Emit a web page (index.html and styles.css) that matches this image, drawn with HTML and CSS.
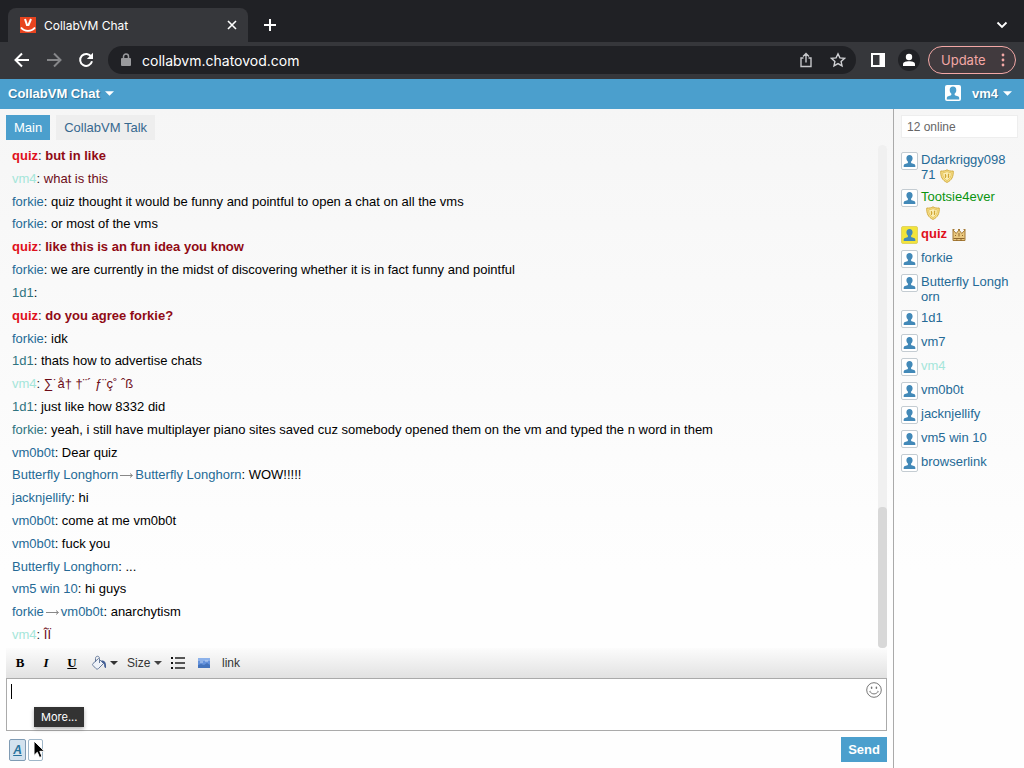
FILE: index.html
```html
<!DOCTYPE html>
<html lang="en">
<head>
    <meta charset="UTF-8">
    <meta name="viewport" content="width=device-width, initial-scale=1.0">
    <title>CollabVM Chat</title>
    <link rel="stylesheet" href="styles.css">
</head>
<body>
    <!-- shared icons -->
    <svg class="defs" width="0" height="0" aria-hidden="true">
        <symbol id="user" viewBox="0 0 16 16">
            <path d="M8 1.500c-2.200 0-3.300 1.500-3.300 3.500 0 1.600.7 2.900 1.700 3.700 0 1-.2 1.500-.8 1.800l-2.400.8c-1 .4-1.400 1-1.400 2v1.200h12.400v-1.200c0-1-.4-1.600-1.400-2l-2.400-.8c-.6-.3-.8-.8-.8-1.800 1-.8 1.700-2.100 1.700-3.700 0-2-1.100-3.500-3.300-3.500z"/>
        </symbol>
        <symbol id="shield" viewBox="0 0 14 14">
            <path d="M7 .8C5.500 1.900 3.300 2.300.8 2c-.3 5.500 1.400 9.300 6.200 11.400C11.800 11.300 13.500 7.500 13.200 2 10.700 2.300 8.500 1.900 7 .8z" fill="#f7e28c" stroke="#d2aa3e"/>
            <path d="M7 2.600C5.700 3.400 4.300 3.700 2.700 3.700c0 3.800 1.300 6.400 4.300 8 3-1.600 4.300-4.200 4.300-8-1.600 0-3-.3-4.300-1.100z" fill="#fbeeb4" stroke="#e3bf55" stroke-width=".8"/>
            <path d="M5.400 5v4M8.400 5v4M5 7h1.500M8 5.200h1.300M8 7.200h1.300" stroke="#cfa32f" fill="none"/>
        </symbol>
        <symbol id="crown" viewBox="0 0 14 14">
            <path d="M1 12.500V2l3.200 3.500L7 2l2.800 3.500L13 2v10.500z" fill="#e9c880" stroke="#a57a35"/>
            <path d="M1.500 10.500h11M3.500 8V7M7 8.500V5M10.500 8V7M4 12h1.500M8 12h2" stroke="#8f672c" fill="none"/>
            <path d="M.5 1.500h2M6 1.500h2M11.500 1.500h2" stroke="#a57a35"/>
        </symbol>
        <symbol id="arrow" viewBox="0 0 8 4">
            <path d="M0 0h8L4 4z" fill="currentColor"/>
        </symbol>
    </svg>

    <div class="browser-tabs">
        <div class="browser-tab">
            <svg class="favicon" width="16" height="16" viewBox="0 0 16 16">
                <rect width="16" height="16" fill="#e8441f"/>
                <path d="M5 2l2 6h1.500l2.500-6" fill="none" stroke="#fff" stroke-width="2"/>
                <path d="M1 10.500c3.500 4.500 10.500 4.500 14 0" fill="none" stroke="#fff" stroke-width="1.800"/>
            </svg>
            <span class="browser-title">CollabVM Chat</span>
            <button class="icon-btn" aria-label="Close tab">
                <svg width="16" height="16" viewBox="0 0 16 16"><path d="M4 4l8 8M12 4l-8 8" stroke="#fff" stroke-width="1.600"/></svg>
            </button>
        </div>
        <button class="icon-btn new-tab" aria-label="New tab">
            <svg width="16" height="16" viewBox="0 0 16 16"><path d="M8 2v12M2 8h12" stroke="#fff" stroke-width="2"/></svg>
        </button>
        <button class="icon-btn tab-search" aria-label="Search tabs">
            <svg width="16" height="16" viewBox="0 0 16 16"><path d="M3.500 5.500L8 10l4.500-4.500" fill="none" stroke="#fff" stroke-width="1.800"/></svg>
        </button>
    </div>

    <div class="browser-bar">
        <div class="nav-buttons">
            <button class="icon-btn" aria-label="Back">
                <svg width="16" height="16" viewBox="0 0 16 16"><path d="M15 8H2M8 1.500L1.500 8 8 14.500" fill="none" stroke="#fff" stroke-width="2"/></svg>
            </button>
            <button class="icon-btn" aria-label="Forward">
                <svg width="16" height="16" viewBox="0 0 16 16"><path d="M1 8h13M8 1.500L14.500 8 8 14.500" fill="none" stroke="#86878a" stroke-width="2"/></svg>
            </button>
            <button class="icon-btn" aria-label="Reload">
                <svg width="16" height="16" viewBox="0 0 16 16"><path d="M13.300 4.800A6 6 0 1 0 14 9.300" fill="none" stroke="#fff" stroke-width="2"/><path d="M15 .8v6.200H8.800z" fill="#fff"/></svg>
            </button>
        </div>
        <div class="address">
            <svg width="10" height="14" viewBox="0 0 10 14"><rect y="5" width="10" height="8" rx="1" fill="#9a9b9e"/><path d="M2.500 6V3.500a2.500 2.500 0 0 1 5 0V6" fill="none" stroke="#9a9b9e" stroke-width="1.500"/></svg>
            <input type="text" aria-label="Address" value="collabvm.chatovod.com">
            <button class="icon-btn" aria-label="Share">
                <svg width="16" height="16" viewBox="0 0 16 16"><path d="M5.500 6H3v8.500h10V6h-2.500M8 10.500V2M5 4.500l3-3 3 3" fill="none" stroke="#c6c7ca" stroke-width="1.400"/></svg>
            </button>
            <button class="icon-btn" aria-label="Bookmark">
                <svg width="16" height="16" viewBox="0 0 16 16"><path d="M8 1.800l1.900 4.100 4.500.5-3.300 3 .9 4.500L8 11.600l-4 2.300.9-4.500-3.300-3 4.500-.5z" fill="none" stroke="#d0d1d4" stroke-width="1.400"/></svg>
            </button>
        </div>
        <button class="icon-btn" aria-label="Side panel">
            <svg width="16" height="16" viewBox="0 0 16 16"><path d="M1 1h14v14H1zM3 3v10h6.500V3z" fill="#fff" fill-rule="evenodd"/></svg>
        </button>
        <button class="icon-btn avatar" aria-label="Profile">
            <svg width="14" height="14" viewBox="0 0 14 14"><circle cx="7" cy="4" r="3.200" fill="#fff"/><path d="M1 13v-1.800C1 9 4 8.200 7 8.200s6 .8 6 3V13z" fill="#fff"/></svg>
        </button>
        <button class="update">
            Update
            <svg width="4" height="14" viewBox="0 0 4 14" fill="#f3a8a6"><circle cx="2" cy="2" r="1.400"/><circle cx="2" cy="7" r="1.400"/><circle cx="2" cy="12" r="1.400"/></svg>
        </button>
    </div>

    <header class="site-header">
        <button class="menu-btn">CollabVM Chat <svg width="9" height="5"><use href="#arrow"/></svg></button>
        <button class="menu-btn">
            <svg class="header-user" width="16" height="16"><use href="#user"/></svg>
            vm4 <svg width="9" height="5"><use href="#arrow"/></svg>
        </button>
    </header>

    <div class="page">
        <main class="chat">
            <nav class="rooms">
                <a class="room active" href="#main">Main</a>
                <a class="room" href="#talk">CollabVM Talk</a>
            </nav>

            <div class="log">
                <div class="messages">
                    <p class="quiz-msg"><a class="quiz" href="#">quiz</a><span>:</span> but in like</p>
                    <p class="vm4-msg"><a class="vm4" href="#">vm4</a><span>:</span> what is this</p>
                    <p><a href="#">forkie</a>: quiz thought it would be funny and pointful to open a chat on all the vms</p>
                    <p><a href="#">forkie</a>: or most of the vms</p>
                    <p class="quiz-msg"><a class="quiz" href="#">quiz</a><span>:</span> like this is an fun idea you know</p>
                    <p><a href="#">forkie</a>: we are currently in the midst of discovering whether it is in fact funny and pointful</p>
                    <p><a class="teal" href="#">1d1</a>:</p>
                    <p class="quiz-msg"><a class="quiz" href="#">quiz</a><span>:</span> do you agree forkie?</p>
                    <p><a href="#">forkie</a>: idk</p>
                    <p><a class="teal" href="#">1d1</a>: thats how to advertise chats</p>
                    <p class="vm4-msg"><a class="vm4" href="#">vm4</a><span>:</span> ∑˙å† †¨´ ƒ¨ç˚ ˆß</p>
                    <p><a class="teal" href="#">1d1</a>: just like how 8332 did</p>
                    <p><a class="teal" href="#">forkie</a>: yeah, i still have multiplayer piano sites saved cuz somebody opened them on the vm and typed the n word in them</p>
                    <p><a href="#">vm0b0t</a>: Dear quiz</p>
                    <p><a href="#">Butterfly Longhorn</a><svg class="to" width="17" height="8" viewBox="0 0 17 8"><path d="M2 4.500h12M12 2.500l2.500 2-2.500 2"/></svg><a href="#">Butterfly Longhorn</a>: WOW!!!!!</p>
                    <p><a href="#">jacknjellify</a>: hi</p>
                    <p><a href="#">vm0b0t</a>: come at me vm0b0t</p>
                    <p><a href="#">vm0b0t</a>: fuck you</p>
                    <p><a href="#">Butterfly Longhorn</a>: ...</p>
                    <p><a href="#">vm5 win 10</a>: hi guys</p>
                    <p><a href="#">forkie</a><svg class="to" width="17" height="8" viewBox="0 0 17 8"><path d="M2 4.500h12M12 2.500l2.500 2-2.500 2"/></svg><a href="#">vm0b0t</a>: anarchytism</p>
                    <p class="vm4-msg"><a class="vm4" href="#">vm4</a><span>:</span> ÎÏ</p>
                </div>
                <div class="scroll-track"><div class="scroll-thumb"></div></div>
            </div>

            <div class="format-bar">
                <button class="format" aria-label="Bold"><b>B</b></button>
                <button class="format" aria-label="Italic"><b><i>I</i></b></button>
                <button class="format" aria-label="Underline"><b><u>U</u></b></button>
                <button class="format color" aria-label="Color">
                    <svg width="16" height="16" viewBox="0 0 16 16"><path d="M2 8.500L7.500 3.500l5 5-5 5c-1 .8-1.800.8-2.600 0L2 10.500c-.7-.7-.7-1.400 0-2z" fill="#eef2f8" stroke="#667a9c"/><path d="M4.500 7V3.500c0-3 4-3 4 0V8" fill="none" stroke="#667a9c"/><path d="M10 5.500c3.500-.5 5.500 1.500 5 7.500-1.500 0-2-1.500-1.800-3.500z" fill="#435f96"/></svg>
                    <svg width="8" height="4"><use href="#arrow"/></svg>
                </button>
                <label class="size">
                    <select aria-label="Size"><option>Size</option></select>
                    <svg width="8" height="4"><use href="#arrow"/></svg>
                </label>
                <button class="format" aria-label="List">
                    <svg width="16" height="14" viewBox="0 0 16 14"><path d="M5 2h10M5 7h10M5 12h10" stroke="#222" stroke-width="1.300"/><path d="M1 2h2M1 7h2M1 12h2" stroke="#111" stroke-width="2"/></svg>
                </button>
                <button class="format" aria-label="Image">
                    <svg width="12" height="10" viewBox="0 0 12 10"><rect width="12" height="10" fill="#6593dc"/><rect width="12" height="3" fill="#8db2ea"/><path d="M0 10V7l3-1 3 1 3-2 3 2v3z" fill="#4474bd"/><path d="M2 4h3M7 3h3" stroke="#c3d6f4"/></svg>
                </button>
                <button class="format link">link</button>
            </div>

            <div class="editor">
                <textarea aria-label="Message"></textarea>
                <span class="caret"></span>
                <button class="icon-btn smile" aria-label="Smileys">
                    <svg width="16" height="16" viewBox="0 0 16 16"><g fill="none" stroke="#777"><circle cx="8" cy="8" r="7.300"/><path d="M4 9.500c1.500 3.200 6.500 3.200 8 0M3.500 9.800l1-.6M11.500 9.200l1 .6"/></g><ellipse cx="5.600" cy="5.800" rx=".8" ry="1.300" fill="#777"/><ellipse cx="10.400" cy="5.800" rx=".8" ry="1.300" fill="#777"/></svg>
                </button>
                <span class="tooltip" role="tooltip">More...</span>
            </div>

            <div class="actions">
                <button class="small-btn pressed" aria-label="Formatting"><i>A</i></button>
                <button class="small-btn more" aria-label="More...">
                    <svg class="pointer" width="13" height="20" viewBox="0 0 13 20"><path d="M1 1v14.500l3.300-3.200 2.200 5.200 2.500-1-2.200-5.200h4.700z" fill="#000" stroke="#fff"/></svg>
                </button>
                <button class="send">Send</button>
            </div>
        </main>

        <aside class="sidebar">
            <input class="online" type="text" aria-label="Search users" placeholder="12 online">
            <ul class="users">
                <li><svg class="user-icon"><use href="#user"/></svg><a href="#">Ddarkriggy09871<svg class="badge"><use href="#shield"/></svg></a></li>
                <li><svg class="user-icon"><use href="#user"/></svg><a class="green" href="#">Tootsie4ever<svg class="badge"><use href="#shield"/></svg></a></li>
                <li><svg class="user-icon gold"><use href="#user"/></svg><a class="quiz" href="#">quiz<svg class="badge"><use href="#crown"/></svg></a></li>
                <li><svg class="user-icon"><use href="#user"/></svg><a href="#">forkie</a></li>
                <li><svg class="user-icon"><use href="#user"/></svg><a href="#">Butterfly Longhorn</a></li>
                <li><svg class="user-icon"><use href="#user"/></svg><a href="#">1d1</a></li>
                <li><svg class="user-icon"><use href="#user"/></svg><a href="#">vm7</a></li>
                <li><svg class="user-icon"><use href="#user"/></svg><a class="vm4" href="#">vm4</a></li>
                <li><svg class="user-icon"><use href="#user"/></svg><a href="#">vm0b0t</a></li>
                <li><svg class="user-icon"><use href="#user"/></svg><a href="#">jacknjellify</a></li>
                <li><svg class="user-icon"><use href="#user"/></svg><a href="#">vm5 win 10</a></li>
                <li><svg class="user-icon"><use href="#user"/></svg><a href="#">browserlink</a></li>
            </ul>
        </aside>
    </div>
</body>
</html>
```

FILE: styles.css
```css
* {
    margin: 0;
    padding: 0;
    box-sizing: border-box;
}

body {
    display: flex;
    flex-direction: column;
    height: 100vh;
    font-family: "Liberation Sans", Arial, sans-serif;
    font-size: 13px;
    color: #000;
    background: #fff;
    overflow: hidden;
}

button, input, select, textarea {
    font: inherit;
    color: inherit;
    background: none;
    border: none;
    outline: none;
}

button {
    cursor: pointer;
}

a {
    color: #256a96;
    text-decoration: none;
}

.defs {
    position: absolute;
}

/* browser */
.browser-tabs {
    display: flex;
    align-items: center;
    height: 42px;
    padding: 8px 14px 0 8px;
    background: #202125;
    flex-shrink: 0;
}

.browser-tab {
    display: flex;
    align-items: center;
    gap: 8px;
    width: 240px;
    height: 34px;
    padding: 0 8px 0 12px;
    background: #36373b;
    border-radius: 8px 8px 0 0;
    color: #fff;
    font-family: Inter, sans-serif;
    font-size: 12px;
}

.browser-title {
    flex: 1;
}

.icon-btn {
    display: flex;
    align-items: center;
    justify-content: center;
}

.new-tab {
    margin-left: 14px;
}

.tab-search {
    margin-left: auto;
}

.browser-bar {
    display: flex;
    align-items: center;
    gap: 12px;
    height: 37px;
    padding: 0 8px 1px 14px;
    background: #36373b;
    flex-shrink: 0;
}

.nav-buttons {
    display: flex;
    gap: 16px;
    margin-right: 2px;
}

.address {
    display: flex;
    align-items: center;
    gap: 16px;
    flex: 1;
    height: 28px;
    padding: 0 10px 0 13px;
    margin-right: 2px;
    border-radius: 14px;
    background: #202125;
    color: #fff;
    font-family: Inter, sans-serif;
    font-size: 14px;
}

.address input {
    flex: 1;
    min-width: 0;
    margin-left: -5px;
}

.avatar {
    width: 22px;
    height: 22px;
    border-radius: 50%;
    background: #202125;
}

.update {
    display: flex;
    align-items: center;
    justify-content: space-between;
    width: 88px;
    height: 28px;
    padding: 0 10px 0 12px;
    margin-left: -4px;
    border: 1px solid #f3a8a6;
    border-radius: 14px;
    background: #413a3e;
    color: #f3a8a6;
    font-family: Inter, sans-serif;
}

/* site header */
.site-header {
    display: flex;
    justify-content: space-between;
    align-items: center;
    height: 30px;
    padding: 0 12px 2px 8px;
    background: #4b9fcd;
    flex-shrink: 0;
}

.menu-btn {
    display: flex;
    align-items: center;
    gap: 5px;
    color: #fff;
    font-weight: bold;
    text-shadow: 1px 1px 1px #2d6f96;
}

.header-user {
    margin-right: 6px;
    border-radius: 2px;
    background: #fff;
    fill: #4b9fcd;
}

.page {
    display: flex;
    flex: 1;
    min-height: 0;
    background: linear-gradient(#f6f6f6, #fefefe 70%);
}

.chat {
    display: flex;
    flex-direction: column;
    flex: 1;
    min-width: 0;
    padding: 6px;
}

.rooms {
    display: flex;
    gap: 6px;
    margin-bottom: 5px;
}

.room {
    padding: 0 8px;
    line-height: 25px;
    background: #eee;
    color: #36688e;
}

.room.active {
    background: #4b9fcd;
    color: #fff;
}

/* messages */
.log {
    display: flex;
    flex: 1;
    min-height: 0;
}

.messages {
    display: flex;
    flex-direction: column;
    flex: 1;
    padding: 0 6px 1px;
}

.messages p {
    flex: 1;
    line-height: 22px;
    white-space: nowrap;
}

.messages .teal {
    color: #2f7480;
}

.messages span {
    color: #222;
    font-weight: normal;
}

.messages .quiz, .users .quiz {
    color: #e0101c;
    font-weight: bold;
}

.messages .vm4, .users .vm4 {
    color: #a5e6da;
}

.quiz-msg {
    color: #900a14;
    font-weight: bold;
}

.vm4-msg {
    color: #6d0c18;
}

.to {
    fill: none;
    stroke: #888;
}

.scroll-track {
    display: flex;
    flex-direction: column;
    justify-content: flex-end;
    width: 9px;
    background: #f0f0f0;
    border-radius: 5px;
}

.scroll-thumb {
    height: 28%;
    border-radius: 4px;
    background: #d8d8d8;
}

/* editor */
.format-bar {
    display: flex;
    align-items: center;
    gap: 6px;
    height: 30px;
    padding: 0 4px;
    background: linear-gradient(#fcfcfc, #e2e2e2);
}

.format {
    display: flex;
    align-items: center;
    justify-content: center;
    min-width: 20px;
    color: #333;
}

.format b {
    color: #000;
    font-family: "Liberation Serif", serif;
}

.color, .size {
    gap: 3px;
}

.color {
    padding: 0 3px;
}

.size {
    display: flex;
    align-items: center;
    color: #444;
}

.size select {
    appearance: none;
    color: #333;
    font-size: 12px;
}

.link {
    padding: 0 2px;
    font-size: 12px;
}

.editor {
    position: relative;
    display: flex;
}

.editor textarea {
    flex: 1;
    height: 53px;
    padding: 4px;
    border: 1px solid #aaa;
    background: #fff;
    resize: none;
}

.caret {
    position: absolute;
    left: 5px;
    top: 6px;
    width: 1px;
    height: 15px;
    background: #000;
}

.smile {
    position: absolute;
    top: 4px;
    right: 5px;
}

.tooltip {
    position: absolute;
    left: 28px;
    top: 29px;
    padding: 0 7px;
    line-height: 20px;
    background: #333;
    color: #fff;
    font-family: Inter, sans-serif;
    font-size: 11px;
    box-shadow: 0 2px 4px rgba(0,0,0,0.3);
}

.actions {
    display: flex;
    align-items: center;
    gap: 2px;
    padding: 6px 0 0 3px;
}

.small-btn {
    width: 17px;
    height: 22px;
    border: 1px solid #9fb6c8;
    border-radius: 2px;
    background: #fff;
}

.pressed {
    background: #d3e2ee;
    border-color: #7f9bb4;
    color: #27729c;
    font-weight: bold;
    font-size: 12px;
    text-decoration: underline;
}

.more {
    position: relative;
    width: 15px;
}

.pointer {
    position: absolute;
    left: 4px;
    top: 0;
}

.send {
    margin-left: auto;
    padding: 0 7px;
    line-height: 25px;
    background: #4b9fcd;
    color: #fff;
    font-weight: bold;
}

/* sidebar */
.sidebar {
    width: 131px;
    padding: 6px 6px 0 7px;
    border-left: 1px solid #aaa;
}

.online {
    width: 100%;
    height: 23px;
    padding: 0 5px;
    border: 1px solid #eee;
    background: #fff;
    font-size: 12px;
}

.online::placeholder {
    color: #666;
}

.users {
    display: flex;
    flex-direction: column;
    gap: 6px;
    margin-top: 14px;
    list-style: none;
}

.users li {
    display: flex;
    align-items: flex-start;
    gap: 3px;
    min-height: 18px;
    line-height: 15px;
}

.users a {
    width: 90px;
    word-break: break-all;
}

.users .green {
    color: #0a9410;
}

.user-icon {
    width: 17px;
    height: 18px;
    border: 1px solid #c4ccd2;
    border-radius: 2px;
    background: #fff;
    fill: #4289b8;
    flex-shrink: 0;
}

.user-icon.gold {
    background: #f3e43a;
    border-color: #e0d465;
}

.badge {
    width: 14px;
    height: 14px;
    margin-left: 5px;
    vertical-align: -4px;
}
```
